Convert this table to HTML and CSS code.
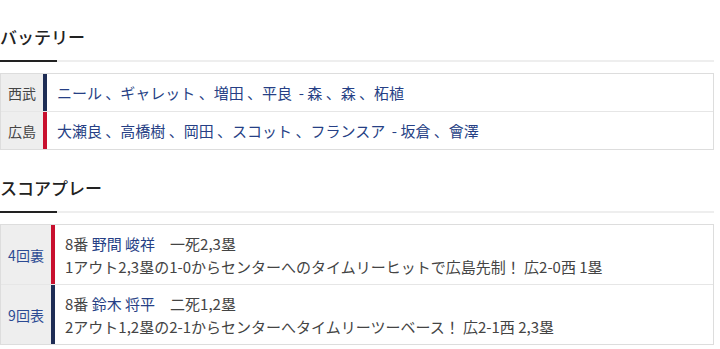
FILE: index.html
```html
<!DOCTYPE html>
<html lang="ja">
<head>
<meta charset="utf-8">
<title>バッテリー・スコアプレー</title>
<link rel="stylesheet" href="styles.css">
</head>
<body>
<div class="page">
  <section class="section">
    <h2 class="heading">バッテリー</h2>
    <div class="table battery">
      <div class="row">
        <div class="label">西武</div>
        <div class="bar bar-lions"></div>
        <div class="cell names">ニール 、ギャレット 、増田 、平良 &nbsp;- 森 、森 、柘植</div>
      </div>
      <div class="row">
        <div class="label">広島</div>
        <div class="bar bar-carp"></div>
        <div class="cell names">大瀬良 、高橋樹 、岡田 、スコット 、フランスア &nbsp;- 坂倉 、會澤</div>
      </div>
    </div>
  </section>
  <section class="section second">
    <h2 class="heading">スコアプレー</h2>
    <div class="table plays">
      <div class="row">
        <div class="label inning">4回裏</div>
        <div class="bar bar-carp"></div>
        <div class="cell play">
          <div>8番 <span class="player">野間 峻祥</span>　一死2,3塁</div>
          <div>1アウト2,3塁の1-0からセンターへのタイムリーヒットで広島先制！ 広2-0西 1塁</div>
        </div>
      </div>
      <div class="row">
        <div class="label inning">9回表</div>
        <div class="bar bar-lions"></div>
        <div class="cell play">
          <div>8番 <span class="player">鈴木 将平</span>　二死1,2塁</div>
          <div>2アウト1,2塁の2-1からセンターへタイムリーツーベース！ 広2-1西 2,3塁</div>
        </div>
      </div>
    </div>
  </section>
</div>
</body>
</html>
```
FILE: styles.css
```css
html, body {
  margin: 0;
  padding: 0;
  background: #fff;
}
body {
  font-family: "Noto Sans CJK JP", "Noto Sans", sans-serif;
  color: #333;
}
.page {
  width: 714px;
  padding-top: 24px;
}
.section.second {
  margin-top: 25px;
}
.heading {
  position: relative;
  margin: 0;
  font-size: 17px;
  line-height: 26px;
  font-weight: 500;
  color: #222;
  padding-bottom: 10px;
  border-bottom: 2px solid #eeeeee;
}
.heading::after {
  content: "";
  position: absolute;
  left: 0;
  bottom: -2px;
  width: 57px;
  height: 2px;
  background: #222;
}
.table {
  margin-top: 11px;
  border: 1px solid #dddddd;
  display: flex;
  flex-direction: column;
}
.row {
  display: flex;
  align-items: stretch;
}
.row + .row {
  border-top: 1px solid #e6e6e6;
}
.label {
  background: #eeeeee;
  color: #444;
  font-size: 14px;
  display: flex;
  align-items: center;
  justify-content: center;
}
.battery .label {
  width: 42px;
}
.battery .row {
  height: 37px;
}
.plays .label {
  width: 50px;
}
.inning {
  color: #2b4a93;
}
.bar {
  width: 4px;
  flex: none;
}
.bar-lions {
  background: #1e2d55;
}
.bar-carp {
  background: #c8102e;
}
.cell {
  flex: 1;
  padding-left: 10px;
  font-size: 15px;
}
.names {
  display: flex;
  align-items: center;
  color: #263f85;
}
.play {
  padding-top: 7px;
  padding-bottom: 6px;
  line-height: 23px;
  color: #444;
}
.player {
  color: #263f85;
}
```
